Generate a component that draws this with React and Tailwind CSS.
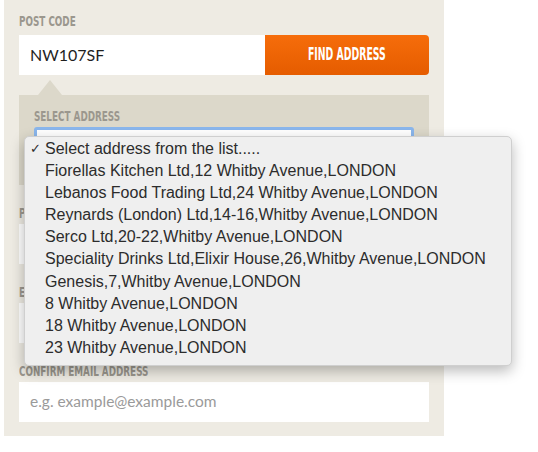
const condensed = { fontFamily: '"DejaVu Sans Condensed", "DejaVu Sans", sans-serif' }

const Label = ({ children, className = '' }) => (
  <div className={`h-4 leading-4 text-[14px] font-bold text-[#9b978e] whitespace-nowrap ${className}`} style={condensed}>
    <span className="inline-block origin-left scale-x-[0.7]">{children}</span>
  </div>
)

const addresses = [
  'Fiorellas Kitchen Ltd,12 Whitby Avenue,LONDON',
  'Lebanos Food Trading Ltd,24 Whitby Avenue,LONDON',
  'Reynards (London) Ltd,14-16,Whitby Avenue,LONDON',
  'Serco Ltd,20-22,Whitby Avenue,LONDON',
  'Speciality Drinks Ltd,Elixir House,26,Whitby Avenue,LONDON',
  'Genesis,7,Whitby Avenue,LONDON',
  '8 Whitby Avenue,LONDON',
  '18 Whitby Avenue,LONDON',
  '23 Whitby Avenue,LONDON',
]

const Field = ({ label, placeholder }) => (
  <div className="mt-5">
    <Label className="mb-[3px]">{label}</Label>
    <div className="h-10 bg-white px-[11px] flex items-center text-[15.5px] text-[#9a9a9a]" style={{ fontFamily: 'Lato, sans-serif' }}>
      {placeholder}
    </div>
  </div>
)

export default function App() {
  return (
    <div className="min-h-screen bg-white pl-1">
      <div className="w-[440px] bg-[#eeebe3] px-[15px] pt-[13px] pb-[14px]">
        <Label className="mb-[6px]">POST CODE</Label>
        <div className="flex h-10">
          <div className="flex-1 bg-white px-[11px] flex items-center text-[16px] text-[#1f1f1f]" style={{ fontFamily: 'Lato, sans-serif' }}>
            NW107SF
          </div>
          <button className="w-[164px] rounded-r-[4px] bg-gradient-to-b from-[#f66d0b] to-[#e55c00] flex items-center justify-center text-white text-[17px] font-bold" style={condensed}>
            <span className="inline-block scale-x-[0.61]">FIND ADDRESS</span>
          </button>
        </div>

        <div className="relative mt-5 bg-[#dcd8ca] px-[15px] pt-[13px] pb-[18px]">
          <div className="absolute -top-[15px] left-[19px] w-0 h-0 border-l-[12px] border-r-[12px] border-b-[15px] border-l-transparent border-r-transparent border-b-[#dcd8ca]" />
          <Label className="mb-[3px]">SELECT ADDRESS</Label>
          <div className="relative h-10 bg-white border-[3px] border-[#8ab6ec] rounded-[3px]">
            <div
              className="absolute left-[-13px] top-[6px] w-[488px] z-10 bg-[#efefef] border border-[#cfcfcf] rounded-[5px] shadow-[0_5px_14px_rgba(0,0,0,0.28)] pt-[1px] pb-[6px] text-[16px] text-[#2c2c2c] leading-[22.1px]"
              style={{ fontFamily: '"Liberation Sans", Arial, sans-serif' }}
            >
              <div className="flex whitespace-nowrap">
                <span className="w-[20px] pl-[5px] text-[13px]">✓</span>
                <span>Select address from the list.....</span>
              </div>
              {addresses.map((a) => (
                <div key={a} className="pl-[20px] whitespace-nowrap">{a}</div>
              ))}
            </div>
          </div>
        </div>

        <Field label="PHONE NUMBER" placeholder="" />
        <Field label="EMAIL ADDRESS" placeholder="" />
        <Field label="CONFIRM EMAIL ADDRESS" placeholder="e.g. example@example.com" />
      </div>
    </div>
  )
}
